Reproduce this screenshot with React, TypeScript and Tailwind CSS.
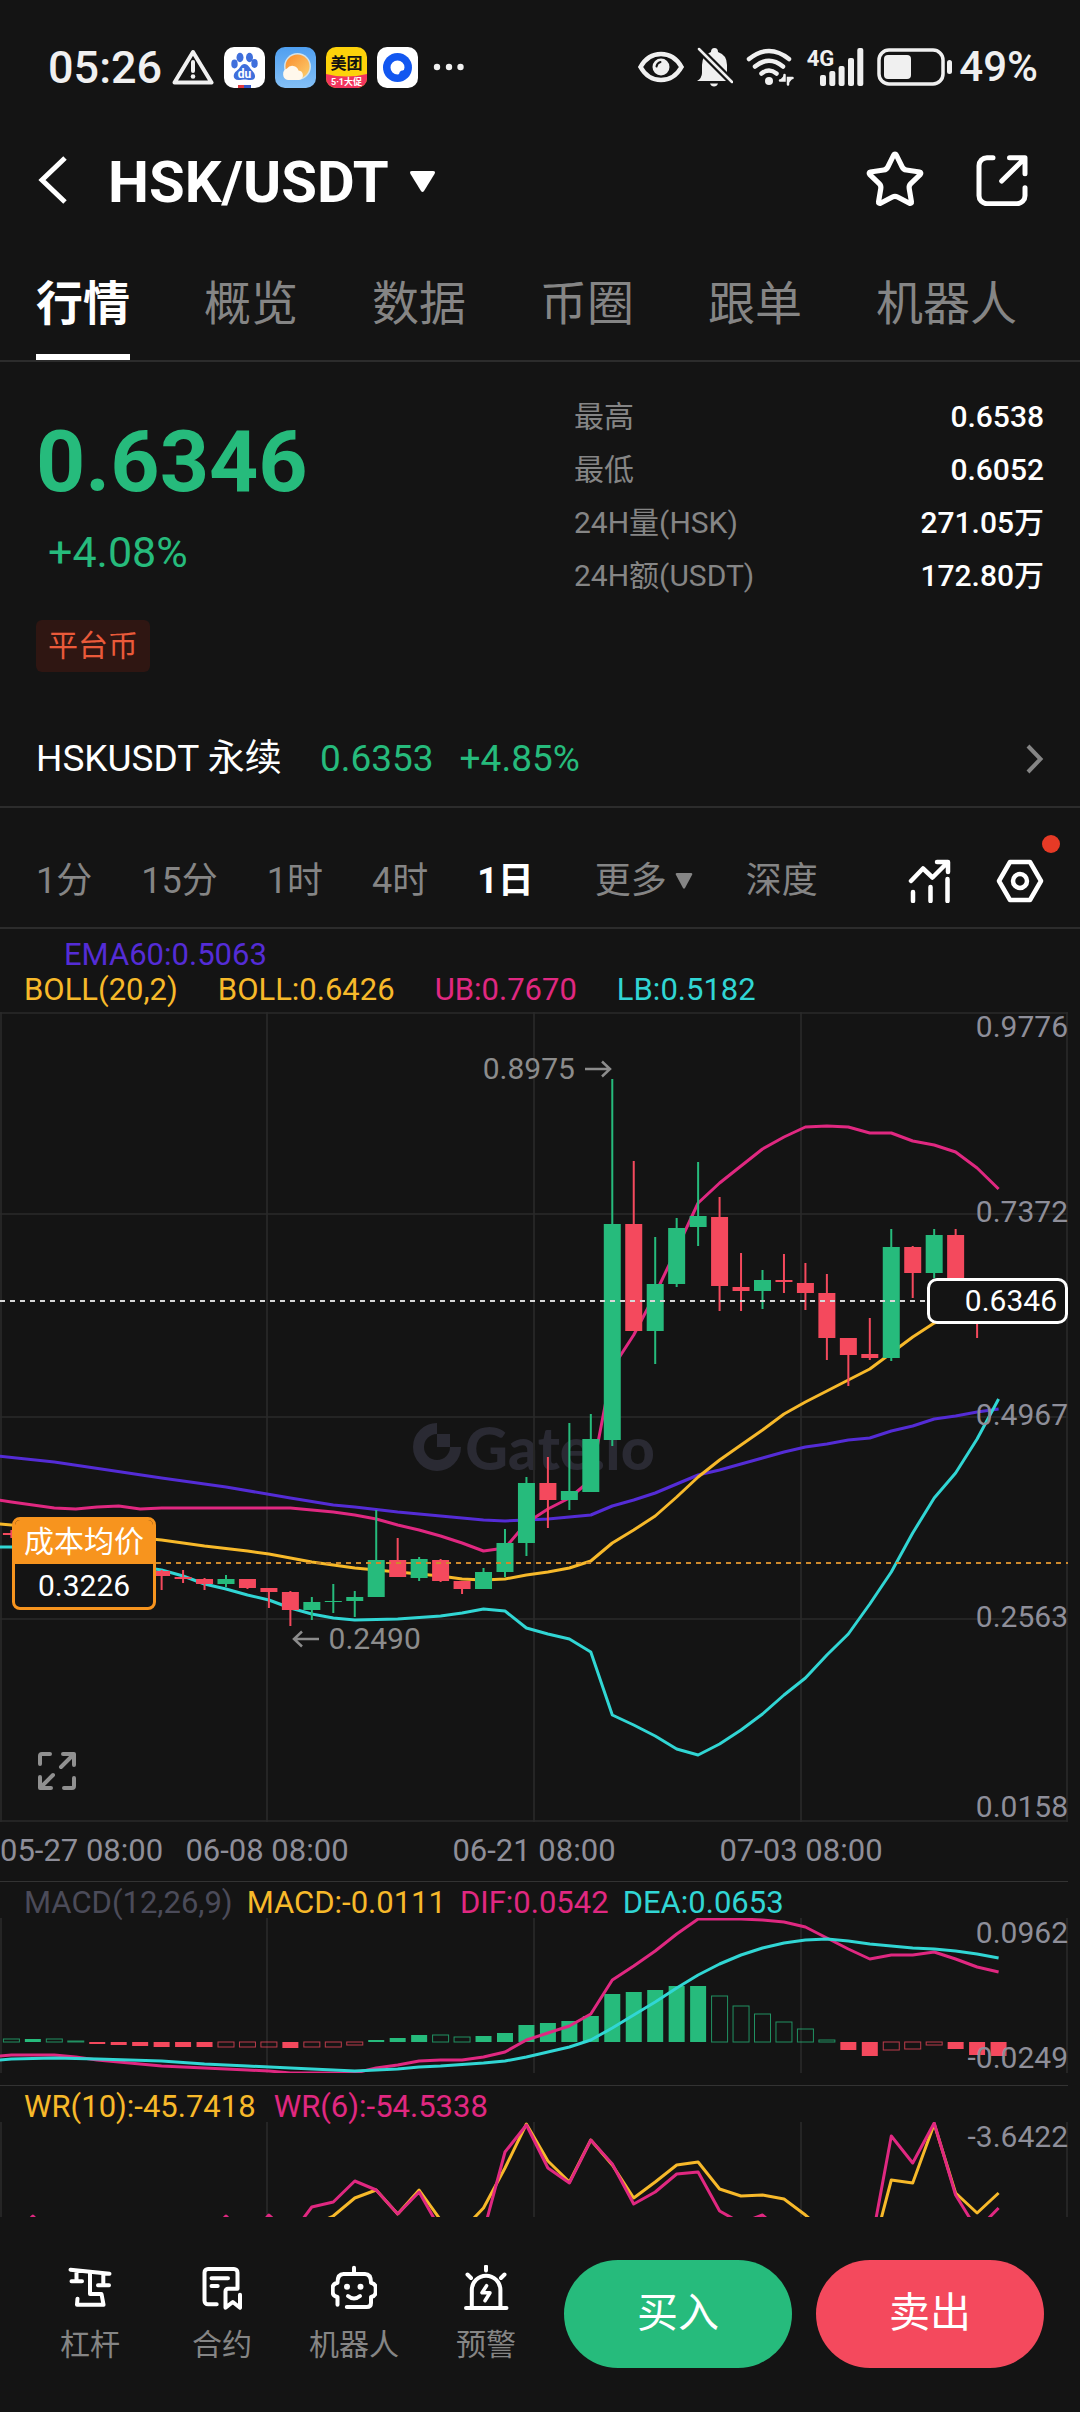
import type { ReactNode } from 'react';
import { Star } from 'lucide-react';

type Point = [number, number];
type Candle = { i: number; up: boolean; top: number; bottom: number; high: number; low: number };

const CHART_W = 1068;
const UP = '#26bb7c';
const DOWN = '#f4495d';
const YELLOW = '#f7b92a';
const PINK = '#e02881';
const CYAN = '#31d6d4';
const PURPLE = '#542cd6';

const xAt = (i: number) => 11.4 + i * 21.46;
const toPoints = (pts: Point[]) => pts.map(([i, y]) => `${xAt(i).toFixed(1)},${y}`).join(' ');

const candle = (i: number, dir: 'u' | 'd', top: number, bottom: number, high: number, low: number): Candle => ({
  i,
  up: dir === 'u',
  top,
  bottom,
  high,
  low,
});

const CANDLES: Candle[] = [
  candle(0, 'd', 521, 523, 518, 526),
  candle(7, 'd', 559, 564, 558, 578),
  candle(8, 'd', 565, 567, 558, 571),
  candle(9, 'd', 567, 572, 566, 578),
  candle(10, 'u', 567, 572, 563, 575),
  candle(11, 'd', 567, 576, 567, 577),
  candle(12, 'd', 576, 580, 576, 596),
  candle(13, 'd', 580, 598, 579, 614),
  candle(14, 'u', 590, 598, 585, 608),
  candle(15, 'u', 589, 590, 572, 601),
  candle(16, 'u', 585, 589, 579, 605),
  candle(17, 'u', 548, 585, 498, 585),
  candle(18, 'd', 548, 565, 526, 565),
  candle(19, 'u', 547, 566, 545, 569),
  candle(20, 'd', 548, 569, 547, 570),
  candle(21, 'd', 569, 577, 569, 582),
  candle(22, 'u', 560, 577, 556, 577),
  candle(23, 'u', 531, 560, 517, 565),
  candle(24, 'u', 471, 531, 465, 544),
  candle(25, 'd', 471, 488, 445, 516),
  candle(26, 'u', 479, 488, 411, 498),
  candle(27, 'u', 427, 480, 402, 480),
  candle(28, 'u', 212, 428, 67, 434),
  candle(29, 'd', 212, 319, 149, 319),
  candle(30, 'u', 272, 319, 225, 352),
  candle(31, 'u', 216, 272, 206, 275),
  candle(32, 'u', 204, 215, 150, 234),
  candle(33, 'd', 205, 274, 185, 299),
  candle(34, 'd', 275, 279, 241, 299),
  candle(35, 'u', 268, 279, 258, 297),
  candle(36, 'd', 268, 270, 242, 281),
  candle(37, 'd', 271, 281, 251, 298),
  candle(38, 'd', 281, 326, 262, 348),
  candle(39, 'd', 326, 343, 326, 374),
  candle(40, 'd', 342, 346, 306, 348),
  candle(41, 'u', 235, 346, 217, 349),
  candle(42, 'd', 235, 261, 234, 286),
  candle(43, 'u', 223, 261, 217, 266),
  candle(44, 'd', 223, 280, 217, 284),
  candle(45, 'd', 280, 296, 276, 326),
];

const EMA60: Point[] = [
  [-0.6, 444], [2, 450], [7, 466], [10, 475], [13, 486], [15, 493], [16, 495], [18, 500], [20, 504], [22, 508],
  [23, 509], [24, 508], [25, 507], [26, 505], [27, 503], [28, 494], [29, 488], [30, 481], [31, 472], [32, 463],
  [33, 458], [34, 452], [35, 446], [36, 440], [37, 435], [38, 432], [39, 428], [40, 426], [41, 419], [42, 414],
  [43, 407], [44, 404], [45, 400], [46, 397],
];

const UPPER: Point[] = [
  [-0.6, 488], [0, 490], [1, 493], [2, 496], [3, 497], [4, 495], [5, 494], [6, 497], [7, 496], [11, 496],
  [13, 496], [15, 500], [16, 503], [17, 507], [18, 513], [19, 518], [20, 524], [21, 531], [22, 539], [23, 536],
  [24, 511], [25, 497], [26, 486], [27, 468], [28, 356], [29, 323], [30, 282], [31, 237], [32, 191], [33, 171],
  [34, 154], [35, 137], [36, 125], [37, 115], [38, 114], [39, 115], [40, 121], [41, 121], [42, 129], [43, 133],
  [44, 140], [45, 156], [46, 177],
];

const MIDDLE: Point[] = [
  [-0.6, 512], [0, 513], [7, 528], [9, 534], [11, 539], [12, 542], [13, 546], [14, 550], [15, 553], [16, 556],
  [17, 558], [18, 560], [19, 562], [20, 564], [21, 567], [22, 568], [23, 567], [24, 563], [25, 560], [26, 556],
  [27, 549], [28, 531], [29, 518], [30, 504], [31, 485], [32, 465], [33, 448], [34, 433], [35, 418], [36, 402],
  [37, 390], [38, 379], [39, 368], [40, 357], [41, 341], [42, 325], [43, 311], [44, 302], [46, 290],
];

const LOWER: Point[] = [
  [-0.6, 535], [0, 535], [7, 558], [8, 564], [9, 572], [10, 577], [11, 583], [12, 588], [13, 596], [14, 602],
  [15, 606], [16, 608], [18, 607], [20, 604], [21, 601], [22, 597], [23, 599], [24, 616], [25, 622], [26, 627],
  [27, 640], [28, 703], [29, 713], [30, 724], [31, 737], [32, 743], [33, 732], [34, 718], [35, 702], [36, 683],
  [37, 666], [38, 643], [39, 622], [40, 592], [41, 560], [42, 521], [43, 486], [44, 461], [45, 427], [46, 387],
];

// [height, hollow] – positive bars rise above the zero line
const MACD_BARS: [number, boolean][] = [
  [3, true], [3, false], [3, true], [1, true], [-2, false], [-3, false], [-4, false], [-5, false], [-5, false],
  [-5, false], [-5, true], [-5, true], [-5, true], [-6, false], [-5, true], [-5, true], [-3, true], [2, false],
  [4, false], [7, false], [7, true], [5, true], [6, false], [9, false], [17, false], [19, false], [21, false],
  [26, false], [48, false], [50, false], [52, false], [56, false], [56, false], [46, true], [36, true], [28, true],
  [20, true], [13, true], [2, true], [-8, false], [-14, false], [-8, true], [-7, true], [-3, true], [-7, false],
  [-13, false], [-14, false],
];

const DIF: Point[] = [
  [-0.6, 138], [0, 137], [2, 137], [3, 139], [4, 142], [5, 144], [7, 148], [9, 150], [11, 152], [12, 153],
  [13, 155], [14, 155], [16, 155], [17, 150], [18, 147], [19, 143], [20, 142], [21, 142], [22, 139], [23, 134],
  [24, 122], [25, 115], [26, 108], [27, 96], [28, 62], [29, 48], [30, 33], [31, 16], [32, 1], [34, 1],
  [35, 2], [36, 4], [37, 9], [38, 20], [39, 31], [40, 41], [41, 37], [42, 37], [43, 34], [44, 41], [45, 49], [46, 54],
];

const DEA: Point[] = [
  [-0.6, 142], [0, 141], [2, 140], [4, 141], [7, 143], [9, 146], [11, 148], [13, 150], [15, 152], [16, 153],
  [17, 152], [18, 151], [19, 149], [20, 148], [22, 145], [23, 143], [24, 139], [25, 134], [26, 129], [27, 122],
  [28, 110], [29, 97], [30, 84], [31, 70], [32, 57], [33, 46], [34, 37], [35, 30], [36, 25], [37, 22], [38, 21],
  [39, 23], [40, 26], [41, 28], [42, 30], [43, 31], [44, 33], [45, 36], [46, 40],
];

const WR10: Point[] = [
  [14, 104], [15, 94], [16, 76], [17, 68], [18, 92], [19, 68], [20, 98], [21.2, 104], [22, 86], [23, 46], [24, 2],
  [25, 39], [26, 60], [27, 18], [28, 43], [29, 76], [30, 60], [31, 43], [32, 40], [33, 67], [34, 74], [35, 73],
  [36, 77], [37, 93], [38, 112], [40, 140], [41, 58], [42, 61], [43, 2], [44, 71], [45, 91], [46, 71],
];

const WR6: Point[] = [
  [0.5, 105], [1, 94], [1.5, 105], [9.5, 105], [10, 94], [10.5, 105], [11.5, 105], [12, 93], [12.6, 105], [13.2, 108],
  [14, 85], [15, 80], [16, 59], [17, 68], [18, 92], [19, 70], [20, 108], [22, 110], [23, 30], [24, 3], [25, 46],
  [26, 61], [27, 18], [28, 42], [29, 82], [30, 70], [31, 52], [32, 50], [33, 89], [34, 101], [35, 93], [36, 112],
  [40, 130], [41, 14], [42, 41], [43, 1], [44, 73], [45, 108], [46, 86],
];

const TABS = ['行情', '概览', '数据', '币圈', '跟单', '机器人'];

const STATS = [
  { label: '最高', value: '0.6538' },
  { label: '最低', value: '0.6052' },
  { label: '24H量(HSK)', value: '271.05万' },
  { label: '24H额(USDT)', value: '172.80万' },
];

const PERIODS = ['1分', '15分', '1时', '4时', '1日'];

const PRICE_LABELS = [
  { value: '0.9776', pos: 'top-0' },
  { value: '0.7372', pos: 'top-[185px]' },
  { value: '0.4967', pos: 'top-[388px]' },
  { value: '0.2563', pos: 'top-[590px]' },
  { value: '0.0158', pos: 'top-[780px]' },
];

function Line({ points, color }: { points: Point[]; color: string }) {
  return <polyline points={toPoints(points)} fill="none" stroke={color} strokeWidth="3" strokeLinejoin="round" />;
}

function VerticalGrid({ height }: { height: number }) {
  return (
    <g stroke="#252525" strokeWidth="2">
      {[1, 267, 534, 801, 1067].map((x) => (
        <line key={x} x1={x} x2={x} y1="0" y2={height} />
      ))}
    </g>
  );
}

function StatusBar() {
  return (
    <div className="flex h-[46px] items-center justify-between pl-12 pr-[42px] text-[#f0f0f0]">
      <div className="flex items-center gap-[10px]">
        <span className="text-[45px] font-medium leading-none">05:26</span>
        <svg className="h-[36px] w-[42px]" viewBox="0 0 42 36" fill="none" stroke="currentColor" strokeWidth="4" strokeLinejoin="round">
          <path d="M21 3 39.500 33.500H2.500Z" />
          <path d="M21 13v9" strokeLinecap="round" />
          <circle cx="21" cy="27.500" r="2.300" fill="currentColor" stroke="none" />
        </svg>

        {/* Notification app icons */}
        <svg className="size-[41px]" viewBox="0 0 41 41">
          <rect width="41" height="41" rx="10" fill="#fff" />
          <g fill="#3f6fdc">
            <ellipse cx="16" cy="10.500" rx="3.500" ry="4.700" />
            <ellipse cx="25.500" cy="10.500" rx="3.500" ry="4.700" />
            <ellipse cx="10.500" cy="17" rx="3.200" ry="4.400" />
            <ellipse cx="30.500" cy="16.500" rx="3.200" ry="4.400" />
            <path d="M20.500 17c4 0 5 4 8 7s4.500 9-2 9c-3 0-4-.5-6-.5s-3 .5-6 .5c-6 0-6-6-2-9 4-3 4-7 8-7Z" />
          </g>
          <text x="20.500" y="31" textAnchor="middle" fontSize="12" fontWeight="700" fill="#fff">du</text>
          <rect x="14" y="38" width="6" height="3" fill="#e0383f" />
          <rect x="20" y="38" width="7" height="3" fill="#3257c8" />
        </svg>
        <svg className="size-[41px]" viewBox="0 0 41 41">
          <defs>
            <linearGradient id="sky" x1="0" y1="0" x2="0" y2="1">
              <stop offset="0" stopColor="#4f9ff0" />
              <stop offset="1" stopColor="#84c0f6" />
            </linearGradient>
            <linearGradient id="sun" x1="0" y1="0" x2="1" y2="1">
              <stop offset="0" stopColor="#f98b2c" />
              <stop offset="1" stopColor="#fcd070" />
            </linearGradient>
          </defs>
          <rect width="41" height="41" rx="10" fill="url(#sky)" />
          <circle cx="22.500" cy="19.500" r="13.500" fill="#cfe3ee" />
          <circle cx="22.500" cy="19.500" r="12" fill="url(#sun)" />
          <path d="M13 33a6 6 0 0 1-1-11.500 6.500 6.500 0 0 1 11.500 2A4.800 4.800 0 0 1 24 33Z" fill="#fff8ec" />
        </svg>
        <svg className="size-[41px]" viewBox="0 0 41 41">
          <defs>
            <clipPath id="mt">
              <rect width="41" height="41" rx="10" />
            </clipPath>
          </defs>
          <g clipPath="url(#mt)">
            <rect width="41" height="41" fill="#fdd20a" />
            <path d="M0 27q20 5 41 0v14H0Z" fill="#f2345e" />
          </g>
          <text x="20.500" y="22" textAnchor="middle" fontSize="16" fontWeight="700" fill="#111">美团</text>
          <text x="20.500" y="38" textAnchor="middle" fontSize="9" fontWeight="700" fill="#fff">5·1大促</text>
        </svg>
        <svg className="size-[41px]" viewBox="0 0 41 41">
          <rect width="41" height="41" rx="10" fill="#fff" />
          <circle cx="20.500" cy="20.500" r="14.500" fill="#1257f0" />
          {/* White bubble with its tail at the lower right */}
          <path d="M20.500 13.500a7 7 0 0 1 7 7q0 2.500-2 3-3 .5-3 2.500-.5 1.500-2 1.500a7 7 0 0 1 0-14Z" fill="#fff" />
        </svg>
        <svg className="ml-1 h-2 w-[34px]" viewBox="0 0 34 8" fill="currentColor">
          <circle cx="5" cy="4" r="3.200" />
          <circle cx="17" cy="4" r="3.200" />
          <circle cx="28.500" cy="4" r="3.200" />
        </svg>
      </div>

      <div className="flex items-center gap-[13px]">
        <svg className="h-[32px] w-[46px]" viewBox="0 0 46 32" fill="none">
          <path d="M2.500 16C7 8 14 3 23 3s16 5 20.500 13C39 24 32 29 23 29S7 24 2.500 16Z" stroke="currentColor" strokeWidth="4.500" />
          <circle cx="23" cy="16" r="8.500" fill="currentColor" />
          <path d="M18.500 15.500q.5-3.500 4-4.500" stroke="#141414" strokeWidth="2" strokeLinecap="round" />
        </svg>
        <svg className="h-[40px] w-[36px]" viewBox="0 0 36 40">
          <path d="M0 34q5-3 5-8v-8q0-10 9-13 0-4 3.500-4T21 5q9 3 9 13v8q0 4 4 8Z" fill="currentColor" />
          <path d="M13 36.500h8q-1 3-4 3t-4-3Z" fill="currentColor" />
          <path d="M2 2 35 35" stroke="#141414" strokeWidth="7" />
          <path d="M2 2 35 35" stroke="currentColor" strokeWidth="2.500" strokeLinecap="round" />
        </svg>
        <svg className="h-[38px] w-[48px]" viewBox="0 0 48 38" fill="none" stroke="currentColor" strokeWidth="4.500" strokeLinecap="round">
          <path d="M3 11q20-16 40 0" />
          <path d="M9 18.500q14-11.500 28 0" />
          <path d="M15.500 25.500q7.500-6 15 0" />
          <circle cx="23" cy="33" r="4" fill="currentColor" stroke="none" />
          <path d="M34 32.500h4.500V27M42 36.500v-6.500h4.500" strokeWidth="2.500" />
          <path d="m33 33 5.500-6v6ZM42 30h5l-5 6Z" fill="currentColor" stroke="none" />
        </svg>
        <div className="flex items-start">
          <span className="-mr-[14px] text-[22px] font-bold leading-[22px]">4G</span>
          <svg className="h-[38px] w-[44px]" viewBox="0 0 44 38" fill="currentColor">
            <rect x="0" y="27" width="6" height="11" rx="2" />
            <rect x="9.300" y="23" width="6" height="15" rx="2" />
            <rect x="18.600" y="18" width="6" height="20" rx="2" />
            <rect x="28" y="10" width="6" height="28" rx="2" />
            <rect x="37.300" y="0" width="6" height="38" rx="2" />
          </svg>
        </div>
        <div className="flex items-center gap-[6px]">
          <svg className="h-[38px] w-[76px]" viewBox="0 0 76 38">
            <rect x="2" y="2" width="64" height="34" rx="10" fill="none" stroke="currentColor" strokeWidth="3.500" />
            <rect x="7" y="7" width="27" height="24" rx="4" fill="currentColor" />
            <rect x="70" y="12" width="5" height="14" rx="2.500" fill="currentColor" />
          </svg>
          <span className="text-[42px] font-medium leading-none">49%</span>
        </div>
      </div>
    </div>
  );
}

function Header() {
  return (
    <header className="flex h-[180px] items-center justify-between pl-9 pr-[52px]">
      <div className="flex items-center">
        <button type="button" aria-label="返回" className="mr-[40px]">
          <svg className="h-[48px] w-[32px]" viewBox="0 0 32 48" fill="none" stroke="currentColor" strokeWidth="5">
            <path d="M29 2 6 24l23 22" />
          </svg>
        </button>
        <button type="button" className="flex items-center gap-5 pt-1">
          <span className="text-[58px] font-bold leading-none">HSK/USDT</span>
          <svg className="h-[22px] w-[27px]" viewBox="0 0 27 22" fill="currentColor">
            <path d="M3 0h21q3 0 1.500 3L15 20q-1.500 2-3 0L1.500 3Q0 0 3 0Z" />
          </svg>
        </button>
      </div>
      <div className="flex items-center gap-[50px]">
        <button type="button" aria-label="收藏">
          <Star className="size-[62px]" strokeWidth={2} />
        </button>
        <button type="button" aria-label="分享">
          <svg className="size-[52px]" viewBox="0 0 52 52" fill="none" stroke="currentColor" strokeWidth="5" strokeLinecap="round" strokeLinejoin="round">
            <path d="M17 3.700H11a8 8 0 0 0-8 8v30a8 8 0 0 0 8 8h30a8 8 0 0 0 8-8v-8" />
            <path d="M33.500 3.700H49v16M48 5 25.700 27" />
          </svg>
        </button>
      </div>
    </header>
  );
}

function Tabs() {
  return (
    <nav className="flex gap-[74px] border-b-2 border-[#2c2c2c] pl-9">
      {TABS.map((tab, i) => (
        <button
          key={tab}
          type="button"
          className={
            i === 0
              ? 'border-b-[6px] border-white pb-4 text-[47px] font-bold leading-[68px] text-white'
              : 'border-b-[6px] border-transparent pb-4 text-[47px] leading-[68px] text-[#858585]'
          }
        >
          {tab}
        </button>
      ))}
    </nav>
  );
}

function Summary() {
  return (
    <section className="px-9">
      <div className="flex justify-between">
        <div className="pt-[52px]">
          <div className="text-[86px] font-bold leading-[96px] text-[#26bb7c]">0.6346</div>
          <div className="mt-[14px] pl-3 text-[43px] leading-[56px] text-[#26bb7c]">+4.08%</div>
        </div>
        <dl className="w-[470px] pt-7 text-[30px]">
          {STATS.map(({ label, value }) => (
            <div key={label} className="flex h-[53px] items-center justify-between">
              <dt className="text-[#858585]">{label}</dt>
              <dd className="font-medium text-white">{value}</dd>
            </div>
          ))}
        </dl>
      </div>
      <span className="mt-[18px] inline-flex h-[52px] items-center rounded-md bg-[#2f1612] px-3 text-[30px] leading-none text-[#ea5a3a]">
        平台币
      </span>
    </section>
  );
}

function PerpetualRow() {
  return (
    <a href="#perpetual" className="mt-10 flex h-[96px] items-center border-b-2 border-[#2c2c2c] px-9 text-[37px]">
      <span className="text-white">HSKUSDT 永续</span>
      <span className="ml-[38px] text-[#26bb7c]">0.6353</span>
      <span className="ml-[26px] text-[#26bb7c]">+4.85%</span>
      <svg className="ml-auto h-[30px] w-[18px]" viewBox="0 0 18 30" fill="none" stroke="#858585" strokeWidth="4">
        <path d="M2 2 14.500 15 2 28" />
      </svg>
    </a>
  );
}

function PeriodBar() {
  return (
    <div className="flex h-[121px] items-center justify-between border-b-2 border-[#2c2c2c] pl-9 pr-9 pt-[26px] text-[36px] text-[#858585]">
      <div className="flex items-center gap-[49px]">
        {PERIODS.map((p) => (
          <button key={p} type="button" className={p === '1日' ? 'font-bold text-white' : undefined}>
            {p}
          </button>
        ))}
        <button type="button" className="ml-3 flex items-center gap-2">
          更多
          <svg className="mr-1 h-[16px] w-[18px]" viewBox="0 0 18 16" fill="currentColor">
            <path d="M2 0h14q2 0 1 2l-7 13q-1 1.500-2 0L1 2Q0 0 2 0Z" />
          </svg>
        </button>
        <button type="button">深度</button>
      </div>
      <div className="flex items-center gap-[44px] text-white">
        <button type="button" aria-label="指标">
          <svg className="size-[44px]" viewBox="0 0 44 44" fill="none" stroke="currentColor" strokeWidth="4.500" strokeLinecap="round" strokeLinejoin="round">
            <path d="M3 22 15 9.500l9.500 9L39 4M29 3h11v10" />
            <path d="M5 33v9M22.500 28v14M39.500 20v22" />
          </svg>
        </button>
        <button type="button" aria-label="设置" className="relative">
          <svg className="h-[44px] w-[48px]" viewBox="0 0 48 44" fill="none" stroke="currentColor" strokeWidth="4.500" strokeLinejoin="round">
            <path d="M14 3h20l11 19-11 19H14L3 22Z" />
            <circle cx="24" cy="22" r="7" />
          </svg>
          <span className="absolute -right-4 -top-6 size-[18px] rounded-full bg-[#e63a26]" />
        </button>
      </div>
    </div>
  );
}

function PriceChart() {
  return (
    <section>
      <div className="pb-[5px] pl-6 pt-2 text-[31px] leading-[35px]">
        <div className="pl-10 text-[#542cd6]">EMA60:0.5063</div>
        <div className="flex gap-10">
          <span className="text-[#f7b92a]">BOLL(20,2)</span>
          <span className="text-[#f7b92a]">BOLL:0.6426</span>
          <span className="text-[#e02881]">UB:0.7670</span>
          <span className="text-[#31d6d4]">LB:0.5182</span>
        </div>
      </div>

      <div className="relative mr-3 h-[810px]">
        {/* Watermark */}
        <div className="absolute inset-x-0 top-[405px] flex h-[60px] items-center justify-center gap-1 text-[#2a2a33]">
          <svg className="size-[48px]" viewBox="0 0 48 48">
            <path d="M24 5.500A18.500 18.500 0 1 0 42.500 24" fill="none" stroke="currentColor" strokeWidth="11" />
            <path d="M24 11h13v13H24Z" fill="currentColor" />
          </svg>
          <span className="font-[Lato] text-[59px] font-black leading-none">Gate.io</span>
        </div>

        <svg className="relative block h-full w-full" viewBox={`0 0 ${CHART_W} 810`} preserveAspectRatio="none">
          <VerticalGrid height={810} />
          <g stroke="#2a2a2a" strokeWidth="1.500">
            {[1, 202, 405, 607, 809].map((y) => (
              <line key={y} x1="0" x2={CHART_W} y1={y} y2={y} />
            ))}
          </g>
          <Line points={EMA60} color={PURPLE} />
          <Line points={UPPER} color={PINK} />
          <Line points={MIDDLE} color={YELLOW} />
          <Line points={LOWER} color={CYAN} />
          {CANDLES.map(({ i, up, top, bottom, high, low }) => (
            <g key={i} fill={up ? UP : DOWN}>
              <rect x={xAt(i) - 1} y={high} width="2" height={low - high} />
              <rect x={xAt(i) - 8.5} y={top} width="17" height={bottom - top} />
            </g>
          ))}
          <line x1="0" x2="930" y1="289" y2="289" stroke="#d8d8d8" strokeWidth="2" strokeDasharray="5 5" />
          <line x1="156" x2={CHART_W} y1="551" y2="551" stroke="#cf8a2c" strokeWidth="2" strokeDasharray="5 5" />
        </svg>

        {PRICE_LABELS.map(({ value, pos }) => (
          <span key={value} className={`absolute right-0 leading-[30px] text-[#8e8e99] ${pos}`}>
            {value}
          </span>
        ))}

        <div className="absolute left-[45.2%] top-[42px] flex items-center gap-[10px] leading-[30px] text-[#8c8c8c]">
          0.8975
          <svg className="h-[18px] w-[27px]" viewBox="0 0 27 18" fill="none" stroke="currentColor" strokeWidth="2.500">
            <path d="M0 9h25M17 1.500 25 9l-8 7.500" />
          </svg>
        </div>
        <div className="absolute left-[27.3%] top-[612px] flex items-center gap-[10px] leading-[30px] text-[#8c8c8c]">
          <svg className="h-[18px] w-[27px]" viewBox="0 0 27 18" fill="none" stroke="currentColor" strokeWidth="2.500">
            <path d="M27 9H2M10 1.500 2 9l8 7.500" />
          </svg>
          0.2490
        </div>

        {/* Average cost marker */}
        <div className="absolute left-3 top-[505px] w-[144px] overflow-hidden rounded-lg border-[3px] border-[#f7941e] bg-[#141414] text-center text-white">
          <div className="h-[44px] bg-[#f7941e] leading-[44px]">成本均价</div>
          <div className="h-[43px] leading-[43px]">0.3226</div>
        </div>

        {/* Last price marker */}
        <div className="absolute right-0 top-[266px] h-[46px] w-[141px] rounded-[10px] border-[3px] border-white bg-[#141414] pr-2 text-right leading-[40px] text-white">
          0.6346
        </div>

        <button type="button" aria-label="全屏" className="absolute left-[37px] top-[739px] text-[#909090]">
          <svg className="size-[40px]" viewBox="0 0 40 40" fill="none" stroke="currentColor" strokeWidth="4" strokeLinecap="round" strokeLinejoin="round">
            <path d="M13 3H5a2 2 0 0 0-2 2v8M27 37h8a2 2 0 0 0 2-2v-8" />
            <path d="M26 3h11v11M36 4 24 16M14 37H3V26M4 36l12-12" />
          </svg>
        </button>
      </div>

      <div className="mr-3 grid h-[59px] grid-cols-8 items-center whitespace-nowrap text-[31px] text-[#8e8e99]">
        <span>05-27 08:00</span>
        <span className="col-span-2 text-center">06-08 08:00</span>
        <span className="col-span-2 text-center">06-21 08:00</span>
        <span className="col-span-2 text-center">07-03 08:00</span>
      </div>
    </section>
  );
}

function MacdChart() {
  const zero = 124;
  return (
    <section className="mr-3 border-t border-[#333] pb-3">
      <div className="flex gap-[14px] pl-6 pt-[6px] text-[31px] leading-[30px]">
        <span className="text-[#4b4b59]">MACD(12,26,9)</span>
        <span className="text-[#f7b92a]">MACD:-0.0111</span>
        <span className="text-[#e02881]">DIF:0.0542</span>
        <span className="text-[#31d6d4]">DEA:0.0653</span>
      </div>
      <div className="relative h-[155px]">
        <svg className="block h-full w-full" viewBox={`0 0 ${CHART_W} 155`} preserveAspectRatio="none">
          <VerticalGrid height={155} />
          {MACD_BARS.map(([h, hollow], i) => {
            const color = h > 0 ? UP : DOWN;
            const y = h > 0 ? zero - h : zero;
            return hollow ? (
              <rect key={i} x={xAt(i) - 8} y={y} width="16" height={Math.abs(h)} fill="none" stroke={color} strokeOpacity="0.75" />
            ) : (
              <rect key={i} x={xAt(i) - 8} y={y} width="16" height={Math.abs(h)} fill={color} />
            );
          })}
          <Line points={DIF} color={PINK} />
          <Line points={DEA} color={CYAN} />
        </svg>
        <div className="absolute right-0 top-0 text-right leading-[30px] text-[#8e8e99]">0.0962</div>
        <div className="absolute bottom-0 right-0 text-right leading-[30px] text-[#8e8e99]">-0.0249</div>
      </div>
    </section>
  );
}

function WrChart() {
  return (
    <section className="mr-3 border-t border-[#333]">
      <div className="flex gap-[18px] pl-6 pt-[6px] text-[31px] leading-[30px]">
        <span className="text-[#f7b92a]">WR(10):-45.7418</span>
        <span className="text-[#e02881]">WR(6):-54.5338</span>
      </div>
      <div className="relative h-[95px]">
        <svg className="block h-full w-full" viewBox={`0 0 ${CHART_W} 95`} preserveAspectRatio="none">
          <VerticalGrid height={95} />
          <Line points={WR10} color={YELLOW} />
          <Line points={WR6} color={PINK} />
        </svg>
        <div className="absolute right-0 top-0 leading-[30px] text-[#8e8e99]">-3.6422</div>
      </div>
    </section>
  );
}

function NavItem({ label, children }: { label: string; children: ReactNode }) {
  return (
    <button type="button" className="flex w-[132px] flex-col items-center pt-[5px] text-white">
      <svg className="size-[46px]" viewBox="0 0 46 46" fill="none" stroke="currentColor" strokeWidth="4" strokeLinecap="round" strokeLinejoin="round">
        {children}
      </svg>
      <span className="mt-[14px] leading-10 text-[#858585]">{label}</span>
    </button>
  );
}

function BottomBar() {
  return (
    <footer className="flex pb-11 pl-6 pr-9 pt-[43px]">
      <nav className="mr-3 flex">
        <NavItem label="杠杆">
          <path d="m3.500 4.700 39 4M9.500 6v10M4.500 16.300H15M36.300 9v11M31 20.300h11" />
          <path d="M23 7.500V29h11.500l2 10.700H10l.5-6" />
        </NavItem>
        <NavItem label="合约">
          <path d="M17.700 39.300H9a3.500 3.500 0 0 1-3.500-3.500V7.500A3.500 3.500 0 0 1 9 4h26a3.500 3.500 0 0 1 3.500 3.500v16.200H29a2.500 2.500 0 0 0-2.500 2.500v16.500l7.300-5.700 7.200 5.700v-13" />
          <path d="M12.500 13.300H29M12.500 21h6.200" />
        </NavItem>
        <NavItem label="机器人">
          <path d="M23 2.700v5.500M6.500 39.700V32q-4.800-1-4.800-5v-4.500q0-3.500 4.800-4.800 0-8.700 6-8.700h21.500q6 0 6 8.700 4.700 1.300 4.700 4.800V27q0 4-4.700 5v6q0 4-4.300 4H15.800" />
          <path d="M17 31q6 5 12 0" />
          <circle cx="16" cy="21.700" r="3" fill="currentColor" stroke="none" />
          <circle cx="29.500" cy="21.700" r="3" fill="currentColor" stroke="none" />
        </NavItem>
        <NavItem label="预警">
          <path d="M8.800 42V25a14.300 14.300 0 0 1 28.600 0v17M3 43h40.500" />
          <path d="M23 1.500v4M4.500 9.500 8 13M41.500 9.500 38 13" />
          <path d="m23.600 20.700-4.600 7h8l-5 8" strokeWidth="3.500" />
        </NavItem>
      </nav>
      <div className="flex flex-1 gap-6 text-[41px] text-white">
        <button type="button" className="h-[108px] flex-1 rounded-full bg-[#26bb7c]">买入</button>
        <button type="button" className="h-[108px] flex-1 rounded-full bg-[#f4495d]">卖出</button>
      </div>
    </footer>
  );
}

export default function App() {
  return (
    <div className="min-h-screen bg-[#141414] pt-11 font-['Roboto','Noto_Sans_CJK_SC',sans-serif] text-[30px] text-white">
      <StatusBar />
      <Header />
      <Tabs />
      <Summary />
      <PerpetualRow />
      <PeriodBar />
      <PriceChart />
      <MacdChart />
      <WrChart />
      <BottomBar />
    </div>
  );
}
